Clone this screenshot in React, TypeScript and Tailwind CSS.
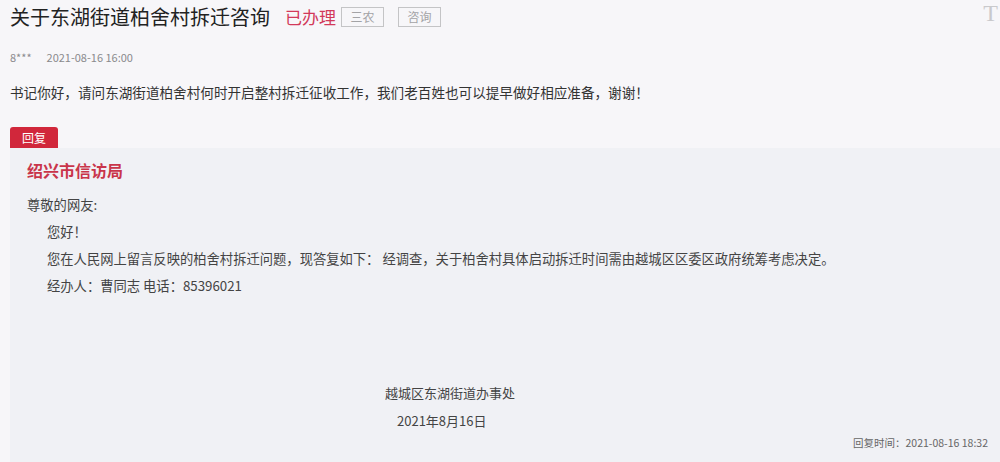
const font = { fontFamily: '"Noto Sans CJK SC", "Noto Sans", sans-serif' };

const Tag = ({ label }: { label: string }) => (
  <span className="inline-flex h-[20px] w-[43px] items-center justify-center border border-[#c4c4c6] text-[12px] text-[#a3a3a6]">
    {label}
  </span>
);

export default function App() {
  return (
    <div
      className="relative h-[462px] w-[1000px] overflow-hidden bg-[#f7f6f9] text-[#333]"
      style={font}
    >
      <span className="absolute right-[2px] top-[-2px] font-['Liberation_Serif',serif] text-[24px] leading-[30px] text-[#c9c9cc]">
        T
      </span>

      <div className="ml-[10px] mt-[2px] flex h-[30px] items-center">
        <h1 className="text-[20px] leading-[30px] text-[#222]">关于东湖街道柏舍村拆迁咨询</h1>
        <span className="ml-[15px] text-[17px] leading-[30px] text-[#d2395a]">已办理</span>
        <div className="ml-[5px] flex gap-[14px]">
          <Tag label="三农" />
          <Tag label="咨询" />
        </div>
      </div>

      <div className="ml-[10px] mt-[17px] flex h-[16px] items-center gap-[15px] text-[11px] leading-[16px] text-[#8a8a8d]">
        <span>8***</span>
        <span>2021-08-16 16:00</span>
      </div>

      <p className="ml-[10px] mt-[17px] text-[13.6px] leading-[20px] text-[#333]">
        书记你好，请问东湖街道柏舍村何时开启整村拆迁征收工作，我们老百姓也可以提早做好相应准备，谢谢！
      </p>

      <div className="ml-[10px] mt-[25px] flex h-[21px] w-[48px] items-center justify-center rounded-t-[3px] bg-[#d1273b] text-[12px] text-white">
        回复
      </div>

      <div className="ml-[10px] h-[314px] bg-[#f0f1f5] pl-[17px] pr-[12px] pt-[11px]">
        <div className="text-[16px] font-bold leading-[22px] text-[#c9354a]">绍兴市信访局</div>
        <div className="mt-[10px] text-[13.3px] leading-[27px] text-[#444]">
          <div>尊敬的网友:</div>
          <div className="pl-[20px]">
            <div>您好！</div>
            <div>您在人民网上留言反映的柏舍村拆迁问题，现答复如下： 经调查，关于柏舍村具体启动拆迁时间需由越城区区委区政府统筹考虑决定。</div>
            <div>经办人：曹同志 电话：85396021</div>
          </div>
        </div>

        <div className="mt-[80px] pl-[358px] text-[13px] leading-[28px] text-[#444]">
          <div>越城区东湖街道办事处</div>
          <div className="pl-[12px]">2021年8月16日</div>
        </div>

        <div className="text-right text-[10.5px] leading-[16px] text-[#666]">回复时间：2021-08-16 18:32</div>
      </div>
    </div>
  );
}
